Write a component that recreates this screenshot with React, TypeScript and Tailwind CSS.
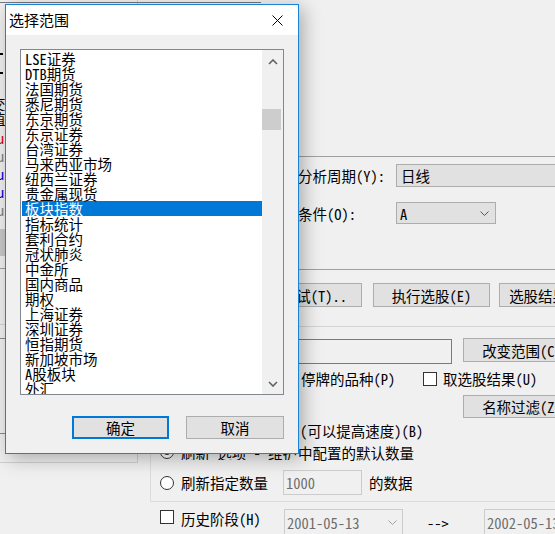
import type { ReactNode } from "react";

const MARKETS = [
  "LSE证券",
  "DTB期货",
  "法国期货",
  "悉尼期货",
  "东京期货",
  "东京证券",
  "台湾证券",
  "马来西亚市场",
  "纽西兰证券",
  "贵金属现货",
  "板块指数",
  "指标统计",
  "套利合约",
  "冠状肺炎",
  "中金所",
  "国内商品",
  "期权",
  "上海证券",
  "深圳证券",
  "恒指期货",
  "新加坡市场",
  "A股板块",
  "外汇",
];

const SELECTED = "板块指数";

function Chevron({ up, color = "#606060" }: { up?: boolean; color?: string }) {
  return (
    <svg width="10" height="6" viewBox="0 0 10 6" className="block">
      <path
        d={up ? "M1 5l4-4 4 4" : "M1 1l4 4 4-4"}
        stroke={color}
        strokeWidth="1.6"
        fill="none"
      />
    </svg>
  );
}

function SmallChevron({ color }: { color: string }) {
  return (
    <svg width="9" height="5" viewBox="0 0 9 5" className="block">
      <path d="M0.5 0.5l4 4 4-4" stroke={color} strokeWidth="1" fill="none" />
    </svg>
  );
}

function Button({ className, children }: { className: string; children: ReactNode }) {
  return (
    <div
      className={`flex shrink-0 items-center border border-[#adadad] bg-[#e1e1e1] whitespace-nowrap ${className}`}
    >
      {children}
    </div>
  );
}

function Box({ className = "" }: { className?: string }) {
  return <div className={`h-[14px] w-[14px] shrink-0 border border-[#333] bg-white ${className}`} />;
}

// right edge of some text that sits behind the dialog
function Cut({ children, color, shift }: { children: ReactNode; color: string; shift: number }) {
  return (
    <div className="h-[15px] w-[5px] overflow-hidden">
      <span className="block whitespace-nowrap" style={{ color, marginLeft: shift }}>
        {children}
      </span>
    </div>
  );
}

export default function App() {
  return (
    <div className="relative h-[534px] w-[555px] overflow-hidden bg-[#f0f0f0] font-['Noto_Sans_Mono_CJK_SC','Noto_Sans_CJK_SC',monospace] text-[14.5px] leading-[15px] text-black">
      <div className="flex">
        {/* left panel, mostly under the dialog */}
        <div className="w-[150px] shrink-0">
          <div className="flex h-[463px] w-[138px] flex-col border-r border-b border-[#d0d0d0]">
            <div className="flex h-[13px] items-start">
              <div className="h-[13px] w-[4px] overflow-hidden">
                <span className="-ml-[10px] block text-[#0000ee] underline">图</span>
              </div>
              <div className="mt-[2px] h-px w-[261px] shrink-0 bg-[#7a7a7a]" />
            </div>
            <div className="mt-[40px] h-[2px] w-[3px] bg-black" />
            <div className="mt-[17px] h-[2px] w-[3px] bg-black" />
            <div className="mt-[22px]">
              <Cut color="#000" shift={-9}>交</Cut>
              <Cut color="#000" shift={-9}>值</Cut>
            </div>
            <div className="mt-[4px] flex flex-col gap-[3px]">
              <Cut color="#e00000" shift={-3}>u</Cut>
              <Cut color="#808080" shift={-3}>u</Cut>
              <Cut color="#0000e0" shift={-3}>u</Cut>
              <Cut color="#0000e0" shift={-3}>u</Cut>
              <Cut color="#808080" shift={-3}>u</Cut>
            </div>
            <div className="mt-[12px] h-[27px] w-[5px] bg-[#c8c8c8]" />
            <div className="mt-[12px] h-px w-[5px] bg-[#a0a0a0]" />
            <div className="mt-[55px] h-px w-[5px] bg-[#d4d4d4]" />
            <div className="mt-[13px] h-px w-[5px] bg-[#8a8a8a]" />
            <div className="mt-[94px] h-px w-[5px] bg-[#8a8a8a]" />
          </div>
        </div>

        {/* right side of the main window */}
        <div className="flex min-w-0 flex-1 flex-col">
          <div className="mt-[156px] h-px bg-[#a0a0a0]" />

          <div className="mt-[7px] flex h-[23px] items-center">
            <span className="ml-[148px] w-[98px] shrink-0 whitespace-nowrap">分析周期(Y):</span>
            <div className="flex h-[23px] w-[170px] shrink-0 items-center border border-[#adadad] bg-[#e1e1e1] pl-[4px]">
              日线
            </div>
          </div>

          <div className="mt-[15px] flex h-[22px] items-center">
            <span className="ml-[148px] w-[98px] shrink-0 whitespace-nowrap">条件(O):</span>
            <div className="flex h-[22px] w-[100px] shrink-0 items-center justify-between border border-[#adadad] bg-[#e1e1e1] pr-[6px] pl-[3px]">
              <span>A</span>
              <SmallChevron color="#555" />
            </div>
          </div>

          <div className="mt-[45px] h-px bg-[#a0a0a0]" />

          <div className="mt-[13px] flex h-[24px]">
            <Button className="ml-[100px] h-[24px] w-[112px] justify-end pr-[14px]">测试(T)..</Button>
            <Button className="ml-[11px] h-[24px] w-[117px] justify-center">执行选股(E)</Button>
            <Button className="ml-[9px] h-[24px] w-[100px] justify-center">选股结果(R)</Button>
          </div>

          <div className="mt-[19px] h-px bg-[#d4d4d4]" />

          <div className="mt-[11px] flex h-[26px] items-start">
            <div className="mt-[1px] ml-[50px] h-[25px] w-[252px] shrink-0 border border-[#7a7a7a] bg-[#f0f0f0]" />
            <Button className="ml-[11px] h-[24px] w-[118px] justify-center">改变范围(C)</Button>
          </div>

          <div className="mt-[7px] flex h-[15px] items-center">
            <span className="ml-[151px] w-[122px] shrink-0 whitespace-nowrap">停牌的品种(P)</span>
            <Box />
            <span className="ml-[6px] whitespace-nowrap">取选股结果(U)</span>
          </div>

          <div className="mt-[9px] flex h-[23px]">
            <Button className="ml-[313px] h-[23px] w-[118px] justify-center">名称过滤(Z)</Button>
          </div>

          <div className="mt-[5px] h-[15px] pl-[150px] whitespace-nowrap">(可以提高速度)(B)</div>

          <div className="h-[64px] border-b border-l border-[#dcdcdc] pl-[9px]">
            <div className="mt-[7px] flex h-[14px] items-center">
              <div className="flex h-[14px] w-[14px] shrink-0 items-center justify-center rounded-full border border-[#333] bg-white">
                <div className="h-[6px] w-[6px] rounded-full bg-[#333]" />
              </div>
              <span className="ml-[7px] w-[117px] shrink-0 overflow-hidden whitespace-nowrap">刷新'选项'-'维护'</span>
              <span className="whitespace-nowrap">中配置的默认数量</span>
            </div>
            <div className="mt-[11px] flex h-[25px] items-center">
              <div className="h-[14px] w-[14px] shrink-0 rounded-full border border-[#333] bg-white" />
              <span className="ml-[7px] w-[102px] shrink-0 whitespace-nowrap">刷新指定数量</span>
              <div className="flex h-[25px] w-[79px] shrink-0 items-center border border-[#cccccc] bg-[#f0f0f0] pl-[2px] text-[#6d6d6d]">
                1000
              </div>
              <span className="ml-[7px] whitespace-nowrap">的数据</span>
            </div>
          </div>

          <div className="mt-[7px] flex h-[25px] items-start pl-[10px]">
            <Box className="mt-[1px]" />
            <span className="mt-[2px] ml-[7px] w-[103px] shrink-0 whitespace-nowrap">历史阶段(H)</span>
            <div className="flex h-[26px] w-[119px] shrink-0 items-center justify-between border border-[#cccccc] bg-[#f0f0f0] pr-[5px] pl-[2px] text-[#6d6d6d]">
              <span>2001-05-13</span>
              <SmallChevron color="#a0a0a0" />
            </div>
            <span className="mt-[6px] ml-[24px] w-[57px] shrink-0 whitespace-nowrap">--&gt;</span>
            <div className="flex h-[26px] w-[120px] shrink-0 items-center border border-[#cccccc] bg-[#f0f0f0] pl-[2px] text-[#6d6d6d]">
              2002-05-13
            </div>
          </div>
        </div>
      </div>

      {/* 选择范围 dialog */}
      <div className="absolute top-[4px] left-[5px] flex h-[450px] w-[294px] flex-col border border-[#1883d7] bg-[#f0f0f0] shadow-[4px_4px_18px_rgba(0,0,0,0.3)]">
        <div className="flex h-[30px] shrink-0 items-center justify-between bg-white pr-[15px] pl-[3px]">
          <span className="font-['Noto_Sans_CJK_SC',sans-serif] text-[15px] leading-[20px]">选择范围</span>
          <svg width="11" height="11" viewBox="0 0 11 11" className="block">
            <path d="M0.5 0.5L10.5 10.5M10.5 0.5L0.5 10.5" stroke="#000" strokeWidth="1" />
          </svg>
        </div>

        <div className="flex flex-1 flex-col px-[14px] pt-[14px]">
          <div className="flex h-[346px] border border-[#828790] bg-white">
            <div className="w-[241px] shrink-0 overflow-hidden pt-[1px]">
              {MARKETS.map((name) => (
                <div
                  key={name}
                  className={
                    name === SELECTED
                      ? "ml-[1px] h-[15px] bg-[#0078d7] pl-[3px] whitespace-nowrap text-white"
                      : "ml-[1px] h-[15px] pl-[3px] whitespace-nowrap"
                  }
                >
                  {name}
                </div>
              ))}
            </div>
            <div className="flex flex-1 flex-col items-center bg-[#f0f0f0]">
              <div className="mt-[9px]">
                <Chevron up />
              </div>
              <div className="mt-[44px] h-[21px] w-[19px] self-start bg-[#cdcdcd]" />
              <div className="flex-1" />
              <div className="mb-[7px]">
                <Chevron />
              </div>
            </div>
          </div>

          <div className="mt-[21px] flex justify-end gap-[17px]">
            <div className="flex h-[23px] w-[97px] items-center justify-center border-2 border-[#0078d7] bg-[#e1e1e1]">
              确定
            </div>
            <div className="flex h-[23px] w-[98px] items-center justify-center border border-[#adadad] bg-[#e1e1e1]">
              取消
            </div>
          </div>
        </div>
      </div>
    </div>
  );
}
